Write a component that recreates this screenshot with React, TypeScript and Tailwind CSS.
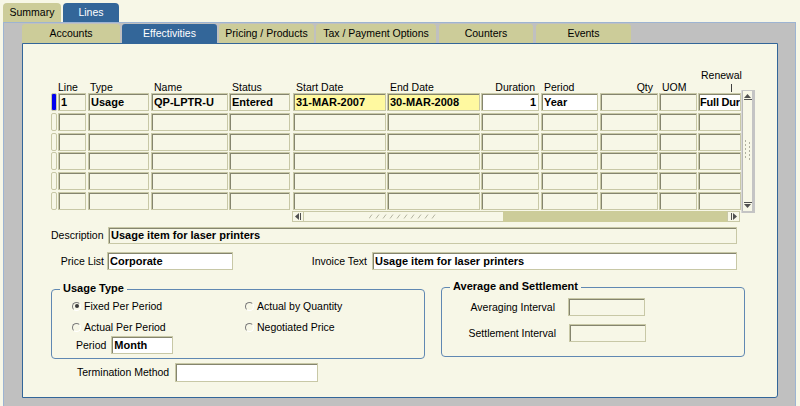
import React from "react";

type Col = { w: string; label?: string; lc?: string };

const COLS: Col[] = [
  { w: "w-[6px]" },
  { w: "w-[28px] ml-[1px]", label: "Line", lc: "pl-0" },
  { w: "w-[61px] ml-[2px]", label: "Type", lc: "pl-[2px]" },
  { w: "w-[77px] ml-[2px]", label: "Name", lc: "pl-[3px]" },
  { w: "w-[61px] ml-[1px]", label: "Status", lc: "pl-[3px]" },
  { w: "w-[93px] ml-[3px]", label: "Start Date", lc: "pl-[3px]" },
  { w: "w-[93px] ml-[1px]", label: "End Date", lc: "pl-[3px]" },
  { w: "w-[58px] ml-[1px]", label: "Duration", lc: "pr-[4px] text-right" },
  { w: "w-[57px] ml-[2px]", label: "Period", lc: "pl-[3px]" },
  { w: "w-[58px] ml-[2px]", label: "Qty", lc: "pr-[5px] text-right" },
  { w: "w-[38px] ml-[1px]", label: "UOM", lc: "pl-[3px]" },
  { w: "w-[43px] ml-[1px]" },
];

// first row values + background per column (index 1..11)
const FIRST = [
  { t: "1", bg: "bg-[#f7f7e7]" },
  { t: "Usage", bg: "bg-[#f7f7e7]" },
  { t: "QP-LPTR-U", bg: "bg-[#f7f7e7]" },
  { t: "Entered", bg: "bg-[#f7f7e7]" },
  { t: "31-MAR-2007", bg: "bg-[#fff9a0]" },
  { t: "30-MAR-2008", bg: "bg-[#fff9a0]" },
  { t: "1", bg: "bg-white justify-end" },
  { t: "Year", bg: "bg-white" },
  { t: "", bg: "bg-[#f7f7e7]" },
  { t: "", bg: "bg-[#f7f7e7]" },
  { t: "Full Dur", bg: "bg-white pl-[1px] pr-0 text-[10.5px] tracking-[-0.2px]" },
];

const FIELD =
  "flex items-center overflow-hidden whitespace-nowrap border border-[#c8c8a6] shadow-[inset_1px_1px_0_#85856e] px-[2px] text-[11px] font-bold";

function Field({ className, children }: { className: string; children?: React.ReactNode }) {
  return <div className={`${FIELD} ${className}`}>{children}</div>;
}

function Radio({ checked, label }: { checked?: boolean; label: string }) {
  return (
    <div className="flex h-[12px] items-center gap-[3px]">
      <span className="flex h-[9px] w-[9px] items-center justify-center rounded-full border border-t-[#7a7a7a] border-l-[#7a7a7a] border-r-[#ffffff] border-b-[#ffffff] bg-[#f7f7e7]">
        {checked && <span className="h-[4px] w-[4px] rounded-full bg-[#3a3a3a]" />}
      </span>
      <span>{label}</span>
    </div>
  );
}

function VScroll() {
  return (
    <div className="-mt-[3px] flex h-[123px] w-[14px] flex-col border-l border-[#d8d8d8] bg-[#c4c4c4] pr-[3px] pt-[1px] pb-[2px]">
      <div className="flex flex-1 flex-col border-l border-[#b8b8b8] bg-[#f7f7e7]">
        <div className="flex h-[12px] flex-col items-center justify-center gap-[1px]">
          <svg width="7" height="4" viewBox="0 0 7 4">
            <polygon points="3.5,0 7,4 0,4" fill="#505050" />
          </svg>
          <span className="h-[1px] w-[8px] bg-[#505050]" />
        </div>
        <div className="flex flex-1 items-center justify-center">
          <svg width="6" height="22" viewBox="0 0 6 22">
            {[0, 4, 8, 12, 16].map((y) => (
              <g key={y} fill="#b0b0a0">
                <rect x="0" y={y} width="1" height="2" />
                <rect x="4" y={y + 2} width="1" height="2" />
              </g>
            ))}
          </svg>
        </div>
        <div className="flex h-[12px] flex-col items-center justify-center gap-[1px]">
          <span className="h-[1px] w-[8px] bg-[#505050]" />
          <svg width="7" height="4" viewBox="0 0 7 4">
            <polygon points="0,0 7,0 3.5,4" fill="#505050" />
          </svg>
        </div>
      </div>
    </div>
  );
}

function HScroll() {
  return (
    <div className="-mt-[2px] ml-[241px] flex h-[11px] w-[448px]">
      <div className="flex w-[12px] items-center justify-center gap-[1px] border border-[#c8c8a6] bg-[#f7f7e7]">
        <svg width="4" height="7" viewBox="0 0 4 7">
          <polygon points="0,3.5 4,0 4,7" fill="#505050" />
        </svg>
        <span className="h-[7px] w-[1px] bg-[#505050]" />
      </div>
      <div className="flex w-[199px] items-center border-y border-[#c8c8a6] bg-[#f7f7e7] pl-[65px]">
        <svg width="68" height="5" viewBox="0 0 68 5">
          {[0, 7, 14, 21, 28, 35, 42, 49, 56, 63].map((x) => (
            <line key={x} x1={x} y1="4.5" x2={x + 3} y2="0.5" stroke="#b4b4a0" strokeWidth="1" />
          ))}
        </svg>
      </div>
      <div className="flex-1 bg-[#cccc99]" />
      <div className="flex w-[13px] items-center justify-center gap-[1px] border border-[#c8c8a6] bg-[#f7f7e7]">
        <span className="h-[7px] w-[1px] bg-[#505050]" />
        <svg width="4" height="7" viewBox="0 0 4 7">
          <polygon points="0,0 4,3.5 0,7" fill="#505050" />
        </svg>
      </div>
    </div>
  );
}

const TABS = [
  { label: "Accounts", cls: "w-[98px]" },
  { label: "Effectivities", cls: "w-[95px] ml-[2px]", active: true },
  { label: "Pricing / Products", cls: "w-[95px] ml-[2px]" },
  { label: "Tax / Payment Options", cls: "w-[120px] ml-[2px]" },
  { label: "Counters", cls: "w-[94px] ml-[3px]" },
  { label: "Events", cls: "w-[95px] ml-[3px]" },
];

export default function App() {
  return (
    <div className="h-[406px] w-[800px] overflow-hidden bg-[#f7f7e7] font-['Liberation_Sans',Arial,sans-serif] text-[10.5px] leading-none text-black">
      {/* top tabs */}
      <div className="flex h-[22px] items-end gap-[2px] pl-[3px]">
        <div className="flex h-[19px] w-[58px] items-center justify-center rounded-t-[4px] bg-[#cccc99]">Summary</div>
        <div className="flex h-[19px] w-[56px] items-center justify-center rounded-t-[4px] bg-[#336699] text-white">Lines</div>
      </div>

      <div className="ml-[3px] flex h-[384px] w-[793px] flex-col border-x border-t border-[#9db4d2] bg-[#c0c0c0] pl-[18px] pt-[1px]">
        {/* sub tabs */}
        <div className="flex h-[19px]">
          {TABS.map((t) => (
            <div
              key={t.label}
              className={`${t.cls} flex items-center justify-center rounded-t-[3px] ${
                t.active ? "bg-[#336699] text-white" : "bg-[#cccc99]"
              }`}
            >
              {t.label}
            </div>
          ))}
        </div>

        <div className="h-[355px] w-[756px] rounded-br-[3px] border border-[#336699] bg-[#f7f7e7] pl-[28px] pt-[26px]">
          {/* table header */}
          <div className="flex h-[23px] items-end">
            {COLS.map((c, i) =>
              i === 11 ? (
                <div key={i} className={`${c.w} flex h-full flex-col pl-[3px]`}>
                  <span>Renewal</span>
                  <span className="ml-[30px] mt-[3px] h-[8px] w-[1px] bg-[#404040]" />
                </div>
              ) : (
                <div key={i} className={`${c.w} ${c.lc ?? ""} pb-[1px] whitespace-nowrap`}>
                  {c.label}
                </div>
              )
            )}
          </div>

          {/* table rows */}
          <div className="flex items-start">
            <div className="flex flex-col gap-y-[1.75px]">
              {[0, 1, 2, 3, 4, 5].map((r) => (
                <div key={r} className="flex">
                  {COLS.map((c, i) => {
                    if (i === 0) {
                      return (
                        <div
                          key={i}
                          className={`${c.w} h-[18px] rounded-[2px] border border-[#c8c8a6] ${
                            r === 0 ? "bg-[#0000ee] border-[#5050c0]" : "bg-[#f7f7e7]"
                          }`}
                        />
                      );
                    }
                    const d = FIRST[i - 1];
                    return (
                      <Field key={i} className={`${c.w} h-[18px] ${r === 0 ? d.bg : "bg-[#f7f7e7]"}`}>
                        {r === 0 ? d.t : ""}
                      </Field>
                    );
                  })}
                </div>
              ))}
            </div>
            <VScroll />
          </div>
          <HScroll />

          {/* description */}
          <div className="mt-[5px] flex items-center">
            <span className="w-[57px]">Description</span>
            <Field className="h-[17px] w-[629px] bg-[#f7f7e7]">Usage item for laser printers</Field>
          </div>

          {/* price list / invoice text */}
          <div className="mt-[8px] flex items-center">
            <span className="w-[53px] text-right">Price List</span>
            <Field className="ml-[3px] h-[18px] w-[126px] bg-white">Corporate</Field>
            <span className="w-[134px] text-right">Invoice Text</span>
            <Field className="ml-[5px] h-[18px] w-[365px] bg-white">Usage item for laser printers</Field>
          </div>

          {/* group boxes */}
          <div className="mt-[17px] flex items-start">
            <div className="relative mt-[2px] h-[70px] w-[374px] rounded-[4px] border border-[#6088b2] pt-[10px]">
              <span className="absolute left-[8px] top-[-7px] bg-[#f7f7e7] px-[3px] text-[11px] font-bold">Usage Type</span>
              <div className="grid grid-cols-[173px_auto] gap-y-[9px] pl-[20px]">
                <Radio checked label="Fixed Per Period" />
                <Radio label="Actual by Quantity" />
                <Radio label="Actual Per Period" />
                <Radio label="Negotiated Price" />
              </div>
              <div className="mt-[3px] flex items-center pl-[24px]">
                <span>Period</span>
                <Field className="ml-[5px] h-[18px] w-[62px] bg-white">Month</Field>
              </div>
            </div>

            <div className="relative ml-[16px] h-[70px] w-[304px] rounded-[4px] border border-[#6088b2] pt-[10px]">
              <span className="absolute left-[8px] top-[-7px] bg-[#f7f7e7] px-[3px] text-[11px] font-bold">
                Average and Settlement
              </span>
              <div className="flex items-center">
                <span className="w-[113px] text-right">Averaging Interval</span>
                <Field className="ml-[13px] h-[18px] w-[77px] bg-[#f7f7e7]" />
              </div>
              <div className="mt-[8px] flex items-center">
                <span className="w-[114px] text-right">Settlement Interval</span>
                <Field className="ml-[13px] h-[18px] w-[77px] bg-[#f7f7e7]" />
              </div>
            </div>
          </div>

          {/* termination */}
          <div className="mt-[4px] flex items-center pl-[26px]">
            <span>Termination Method</span>
            <Field className="ml-[6px] h-[19px] w-[143px] bg-white" />
          </div>
        </div>
      </div>
    </div>
  );
}
